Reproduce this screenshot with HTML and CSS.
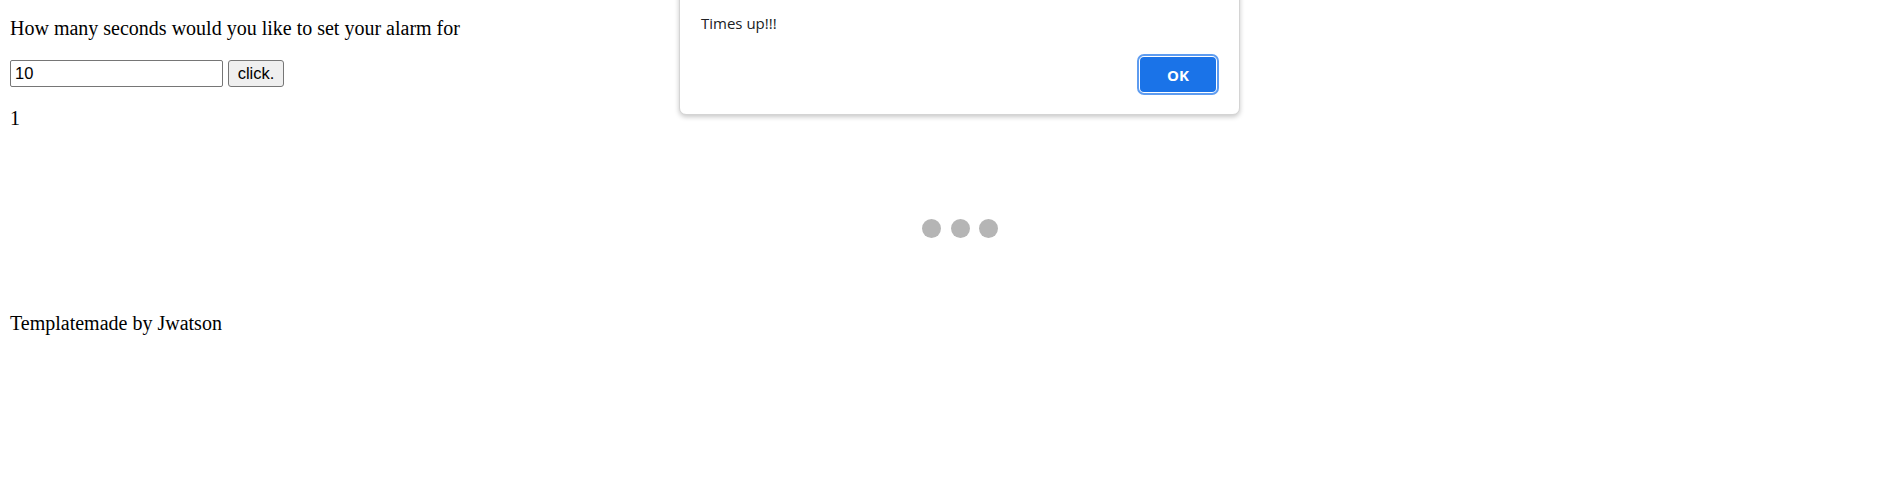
FILE: index.html
```html
<!DOCTYPE html>
<html>
<head>
<meta charset="utf-8">
<title>Alarm</title>
<link rel="stylesheet" href="styles.css">
</head>
<body>
<p class="question">How many seconds would you like to set your alarm for</p>
<div class="controls">
  <input class="seconds" type="text" value="10">
  <button class="go">click.</button>
</div>
<p class="count">1</p>
<div class="loader">
  <span class="dot"></span><span class="dot"></span><span class="dot"></span>
</div>
<p class="footer">Templatemade by Jwatson</p>

<div class="dialog">
  <div class="dialog-msg">Times up!!!</div>
  <div class="dialog-actions">
    <button class="ok">OK</button>
  </div>
</div>
</body>
</html>
```

FILE: styles.css
```css
html, body {
  margin: 0;
  padding: 0;
  background: #fff;
}
body {
  padding: 0 10px;
  font-family: "Liberation Serif", "Times New Roman", serif;
  font-size: 20px;
  line-height: 23px;
  color: #000;
}
p { margin: 0; }
.question {
  padding-top: 17px;
}
.controls {
  margin-top: 20px;
  display: flex;
  gap: 5px;
  height: 27px;
}
.seconds {
  box-sizing: border-box;
  width: 213px;
  height: 27px;
  margin: 0;
  border: 1px solid #767676;
  border-radius: 2px;
  padding: 1px 4px;
  font-family: "Liberation Sans", Arial, sans-serif;
  font-size: 16.5px;
  color: #000;
  background: #fff;
}
.go {
  box-sizing: border-box;
  width: 56px;
  height: 27px;
  margin: 0;
  border: 1px solid #767676;
  border-radius: 3px;
  background: #efefef;
  padding: 0;
  font-family: "Liberation Sans", Arial, sans-serif;
  font-size: 16.5px;
  color: #000;
}
.count {
  margin-top: 20px;
}
.loader {
  height: 182px;
  display: flex;
  align-items: center;
  justify-content: center;
  gap: 9.5px;
  padding-left: 37px;
  padding-top: 15px;
  box-sizing: border-box;
}
.dot {
  width: 19px;
  height: 19px;
  border-radius: 50%;
  background: #b5b5b5;
}
.dialog {
  position: absolute;
  left: 679px;
  top: -20px;
  width: 561px;
  box-sizing: border-box;
  background: #fff;
  border: 1px solid #d4d4d4;
  border-radius: 0 0 7px 7px;
  box-shadow: 0 2px 5px rgba(0,0,0,0.22);
  padding: 31.5px 20px 19px 21px;
  font-family: "Open Sans", "Noto Sans", sans-serif;
}
.dialog-msg {
  font-size: 15px;
  line-height: 20px;
  color: #202124;
}
.dialog-actions {
  display: flex;
  justify-content: flex-end;
  margin-top: 21.5px;
}
.ok {
  box-sizing: border-box;
  width: 76px;
  height: 35px;
  margin: 3px;
  border: none;
  border-radius: 4px;
  background: #1a73e8;
  color: #fff;
  font-family: "Open Sans", "Noto Sans", sans-serif;
  font-weight: 700;
  font-size: 15px;
  outline: 2px solid #5e9cf0;
  outline-offset: 1px;
}
```
